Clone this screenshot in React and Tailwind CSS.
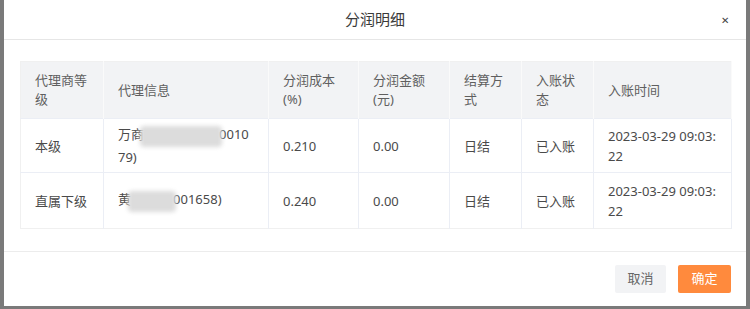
import React from "react";

const font = { fontFamily: '"Noto Sans", "Noto Sans CJK SC", sans-serif' };

function Blur({ w, ml = 0 }) {
  return (
    <span
      className="inline-block align-middle rounded-[4px] bg-[#dcdcdc] blur-[2px]"
      style={{ width: w, height: 21, marginLeft: ml, marginRight: -3 }}
    />
  );
}

const th = "border-r border-[#fafafa] bg-[#f2f3f5] px-[14px] text-left align-middle font-normal text-[13px] leading-[19px] text-[#5f5f5f]";
const td = "border-r border-t border-[#ebeef5] px-[14px] align-middle font-normal text-[13px] leading-[20px] text-[#4a4a4a]";

export default function App() {
  return (
    <div className="w-[750px] h-[309px] bg-[#7a7a7a] pl-[4px] pr-[4px] pb-[3px]" style={font}>
      <div className="h-full w-[742px] bg-white flex flex-col">
        <div className="relative h-[40px] border-b border-[#e6e6e6] flex items-center justify-center">
          <span className="text-[15px] text-[#3a3a3a]">分润明细</span>
          <span className="absolute right-[17px] top-[13px] text-[10px] text-[#444]">✕</span>
        </div>
        <div className="pl-[16px] pt-[21px] pb-[22px]">
          <table className="table-fixed border-collapse w-[711px] border border-[#f0f0f0]">
            <colgroup>
              <col style={{ width: 83 }} />
              <col style={{ width: 165 }} />
              <col style={{ width: 90 }} />
              <col style={{ width: 91 }} />
              <col style={{ width: 72 }} />
              <col style={{ width: 72 }} />
              <col style={{ width: 138 }} />
            </colgroup>
            <thead>
              <tr className="h-[57px]">
                <th className={th}>代理商等<br />级</th>
                <th className={th}>代理信息</th>
                <th className={th}>分润成本<br />(%)</th>
                <th className={th}>分润金额<br />(元)</th>
                <th className={th}>结算方<br />式</th>
                <th className={th}>入账状<br />态</th>
                <th className={th}>入账时间</th>
              </tr>
            </thead>
            <tbody>
              <tr className="h-[54px]">
                <td className={td}>本级</td>
                <td className={td}>
                  万商<Blur w={82} ml={-4} />0010<br />79)
                </td>
                <td className={td}>0.210</td>
                <td className={td}>0.00</td>
                <td className={td}>日结</td>
                <td className={td}>已入账</td>
                <td className={td}>2023-03-29 09:03:<br />22</td>
              </tr>
              <tr className="h-[56px]">
                <td className={td}>直属下级</td>
                <td className={td}>
                  黄<Blur w={48} ml={-3} />001658)
                </td>
                <td className={td}>0.240</td>
                <td className={td}>0.00</td>
                <td className={td}>日结</td>
                <td className={td}>已入账</td>
                <td className={td}>2023-03-29 09:03:<br />22</td>
              </tr>
            </tbody>
          </table>
        </div>
        <div className="flex-1 border-t border-[#ececec] flex justify-end items-start pt-[13px] pr-[15px] gap-[12px]">
          <button className="h-[28px] w-[51px] rounded-[2px] bg-[#f2f3f5] text-[13px] text-[#666]">取消</button>
          <button className="h-[28px] w-[53px] rounded-[2px] bg-[#ff8a3d] text-[13px] text-white">确定</button>
        </div>
      </div>
    </div>
  );
}
